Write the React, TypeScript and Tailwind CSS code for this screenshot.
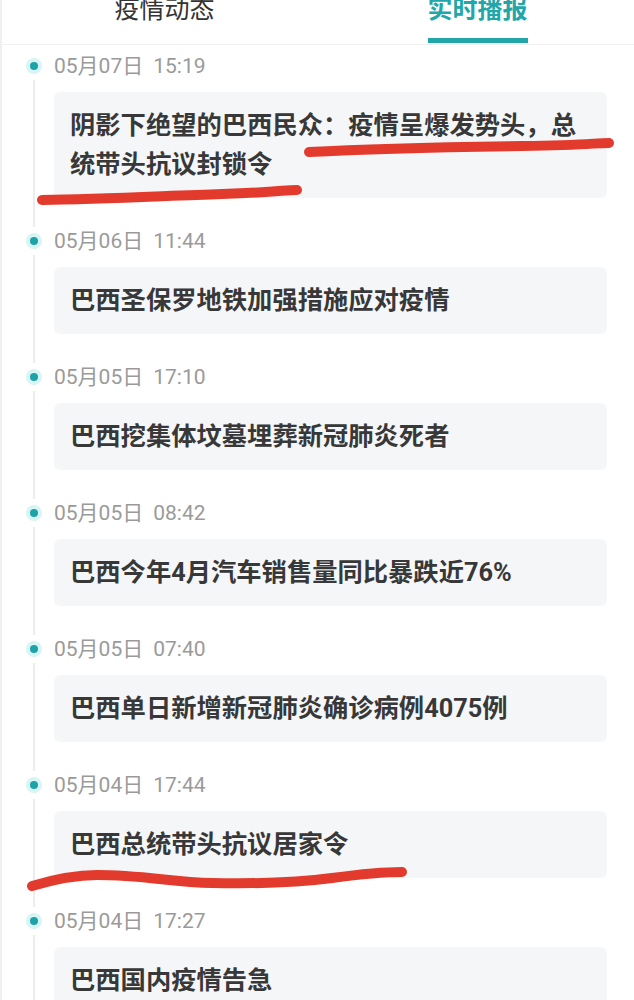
import React from "react";

interface Item {
  day: string;
  time: string;
  title: string;
}

const items: Item[] = [
  { day: "05月07日", time: "15:19", title: "阴影下绝望的巴西民众：疫情呈爆发势头，总统带头抗议封锁令" },
  { day: "05月06日", time: "11:44", title: "巴西圣保罗地铁加强措施应对疫情" },
  { day: "05月05日", time: "17:10", title: "巴西挖集体坟墓埋葬新冠肺炎死者" },
  { day: "05月05日", time: "08:42", title: "巴西今年4月汽车销售量同比暴跌近76%" },
  { day: "05月05日", time: "07:40", title: "巴西单日新增新冠肺炎确诊病例4075例" },
  { day: "05月04日", time: "17:44", title: "巴西总统带头抗议居家令" },
  { day: "05月04日", time: "17:27", title: "巴西国内疫情告急" },
];

const font = { fontFamily: '"Roboto", "Noto Sans CJK SC", sans-serif' };

export default function App() {
  return (
    <div className="relative min-h-screen bg-white border-l-2 border-[#f0f0f0]" style={font}>
      {/* tabs */}
      <div className="h-[45px] grid grid-cols-2 pl-[6px] border-b border-[#f0f0f0] overflow-hidden">
        <div className="flex flex-col items-center">
          <span className="-mt-[3px] text-[25px] leading-[25px] text-[#333]">疫情动态</span>
        </div>
        <div className="flex flex-col items-center">
          <span className="-mt-[3px] text-[25px] leading-[25px] font-bold text-[#22a6a8]">实时播报</span>
          <span className="mt-[16px] w-[100px] h-[5px] bg-[#22a6a8]" />
        </div>
      </div>

      {/* timeline */}
      <div className="pt-[7px]">
        {items.map((it, i) => (
          <div key={i} className="flex">
            <div className="w-[20px] ml-[22px] mr-[10px] flex flex-col items-center">
              <div className="h-[28px] flex items-center">
                <span className="w-[16px] h-[16px] rounded-full bg-[#d8f4f5] flex items-center justify-center">
                  <span className="w-[8px] h-[8px] rounded-full bg-[#1ba3a7]" />
                </span>
              </div>
              <div className="flex-1 w-[2px] bg-[#ececec]" />
            </div>
            <div className="flex-1 mr-[27px] pb-[29px]">
              <div className="h-[28px] leading-[28px] text-[21px] text-[#9a9a9a]">
                {it.day}
                <span className="ml-[10px]">{it.time}</span>
              </div>
              <div className="mt-[12px] bg-[#f5f6f8] rounded-md px-4 py-[14px] text-[25.3px] leading-[39px] font-bold text-[#383838]">
                {it.title}
              </div>
            </div>
          </div>
        ))}
      </div>

      {/* hand-drawn red marks */}
      <svg className="absolute inset-0 pointer-events-none" width="634" height="1000" viewBox="0 0 634 1000">
        <g fill="none" stroke="#e23b2e" strokeWidth="10" strokeLinecap="round">
          <path d="M307 152 C380 148 450 147 520 146 S590 143 607 143" />
          <path d="M40 200 C100 199 160 196 220 194 S280 190 295 190" />
          <path d="M30 886 C50 880 75 875 95 875 C140 875 170 882 210 883 C260 884 300 882 330 878 C360 874 385 872 400 872" />
        </g>
      </svg>
    </div>
  );
}
